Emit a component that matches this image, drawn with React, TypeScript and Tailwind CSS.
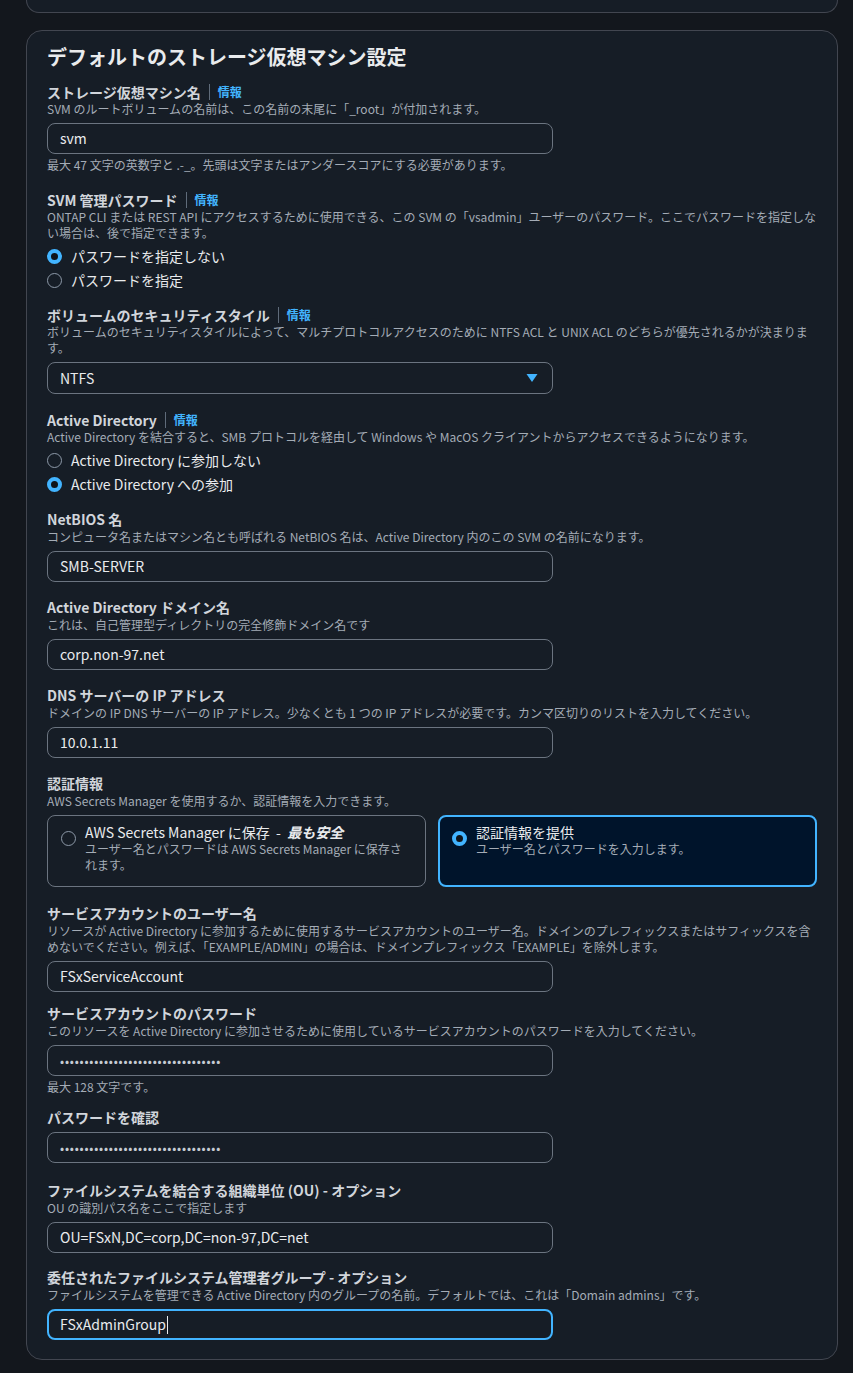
import type { ReactNode } from "react";

const FONT = { fontFamily: '"Noto Sans CJK JP", "Noto Sans", sans-serif' };

function Info() {
  return (
    <>
      <span className="mx-2 inline-block h-[16px] w-px bg-[#5f6b7a] align-middle" />
      <span className="text-[12px] font-bold text-[#42b4ff]">情報</span>
    </>
  );
}

function Label({ children, info }: { children: ReactNode; info?: boolean }) {
  return (
    <div className="flex h-[20px] items-center text-[14px] font-bold leading-[20px] text-[#d1d5db]">
      <span>{children}</span>
      {info && <Info />}
    </div>
  );
}

function Desc({ children, tight }: { children: ReactNode; tight?: boolean }) {
  return (
    <div className={tight ? "-mt-px text-[12px] leading-[16px] text-[#a4acb6]" : "text-[12px] leading-[16px] text-[#a4acb6]"}>
      {children}
    </div>
  );
}

function TextInput({ value, focused, password }: { value: string; focused?: boolean; password?: boolean }) {
  return (
    <div
      className={
        focused
          ? "mt-[6px] flex h-[31px] w-[506px] items-center rounded-lg border-2 border-[#42b4ff] bg-[#161d26] px-[11px] text-[14px] text-[#e9ebed]"
          : "mt-[6px] flex h-[31px] w-[506px] items-center rounded-lg border border-[#6b7480] bg-[#161d26] px-3 text-[14px] text-[#e9ebed]"
      }
    >
      {password ? (
        <span className="text-[12px] tracking-[0.8px] text-[#c6ccd4]">{"•".repeat(33)}</span>
      ) : (
        <span>{value}</span>
      )}
      {focused && <span className="ml-px inline-block h-[18px] w-px bg-[#e9ebed]" />}
    </div>
  );
}

function Radio({ checked }: { checked?: boolean }) {
  return checked ? (
    <span className="inline-block h-[15px] w-[15px] shrink-0 rounded-full border-[4px] border-[#42b4ff] bg-[#0f141a]" />
  ) : (
    <span className="inline-block h-[15px] w-[15px] shrink-0 rounded-full border border-[#8d99a8]" />
  );
}

function RadioRow({ label, checked }: { label: string; checked?: boolean }) {
  return (
    <div className="flex h-[24px] items-center gap-[9px] text-[14px] text-[#e9ebed]">
      <Radio checked={checked} />
      <span>{label}</span>
    </div>
  );
}

function Hint({ children }: { children: ReactNode }) {
  return <div className="mt-[3px] text-[12px] leading-[16px] text-[#a4acb6]">{children}</div>;
}

export default function App() {
  return (
    <div className="min-h-[1373px] w-[853px] bg-[#13171d] pl-[26px] pr-[15px]" style={FONT}>
      <div className="h-[13px] rounded-b-2xl border border-t-0 border-[#424650] bg-[#161d26]" />

      <div className="mt-[17px] rounded-2xl border border-[#424650] bg-[#161d26] px-5 pb-[19px] pt-[13px]">
        <h2 className="text-[20px] font-bold leading-[26px] text-[#e9ebed]">デフォルトのストレージ仮想マシン設定</h2>

        <div className="mt-[12px]">
          <Label info>ストレージ仮想マシン名</Label>
          <Desc tight>SVM のルートボリュームの名前は、この名前の末尾に「_root」が付加されます。</Desc>
          <TextInput value="svm" />
          <Hint>最大 47 文字の英数字と .-_。先頭は文字またはアンダースコアにする必要があります。</Hint>
        </div>

        <div className="mt-[17px]">
          <Label info>SVM 管理パスワード</Label>
          <Desc tight>
            ONTAP CLI または REST API にアクセスするために使用できる、この SVM の「vsadmin」ユーザーのパスワード。ここでパスワードを指定しない場合は、後で指定できます。
          </Desc>
          <div className="mt-[3px]">
            <RadioRow label="パスワードを指定しない" checked />
            <RadioRow label="パスワードを指定" />
          </div>
        </div>

        <div className="mt-[13px]">
          <Label info>ボリュームのセキュリティスタイル</Label>
          <Desc tight>
            ボリュームのセキュリティスタイルによって、マルチプロトコルアクセスのために NTFS ACL と UNIX ACL のどちらが優先されるかが決まります。
          </Desc>
          <div className="mt-[6px] flex h-[32px] w-[506px] items-center justify-between rounded-lg border border-[#6b7480] px-3 text-[14px] text-[#e9ebed]">
            <span>NTFS</span>
            <svg width="12" height="10" viewBox="0 0 12 10" className="mr-[2px]">
              <path d="M0.5 1 L11.5 1 L6 9 Z" fill="#42b4ff" />
            </svg>
          </div>
        </div>

        <div className="mt-[16px]">
          <Label info>Active Directory</Label>
          <Desc tight>Active Directory を結合すると、SMB プロトコルを経由して Windows や MacOS クライアントからアクセスできるようになります。</Desc>
          <div className="mt-[3px]">
            <RadioRow label="Active Directory に参加しない" />
            <RadioRow label="Active Directory への参加" checked />
          </div>
        </div>

        <div className="mt-[13px]">
          <Label>NetBIOS 名</Label>
          <Desc>コンピュータ名またはマシン名とも呼ばれる NetBIOS 名は、Active Directory 内のこの SVM の名前になります。</Desc>
          <TextInput value="SMB-SERVER" />
        </div>

        <div className="mt-[15px]">
          <Label>Active Directory ドメイン名</Label>
          <Desc>これは、自己管理型ディレクトリの完全修飾ドメイン名です</Desc>
          <TextInput value="corp.non-97.net" />
        </div>

        <div className="mt-[15px]">
          <Label>DNS サーバーの IP アドレス</Label>
          <Desc>ドメインの IP DNS サーバーの IP アドレス。少なくとも 1 つの IP アドレスが必要です。カンマ区切りのリストを入力してください。</Desc>
          <TextInput value="10.0.1.11" />
        </div>

        <div className="mt-[15px]">
          <Label>認証情報</Label>
          <Desc>AWS Secrets Manager を使用するか、認証情報を入力できます。</Desc>
          <div className="mt-[6px] grid grid-cols-2 gap-3">
            <div className="flex h-[72px] gap-[9px] rounded-lg border border-[#6b7480] px-[13px] pt-[7px]">
              <span className="mt-[4px]">
                <Radio />
              </span>
              <div>
                <div className="text-[14px] leading-[18px] text-[#e9ebed]">
                  AWS Secrets Manager に保存&nbsp; - &nbsp;<i className="font-bold">最も安全</i>
                </div>
                <div className="text-[12px] leading-[16px] text-[#a4acb6]">ユーザー名とパスワードは AWS Secrets Manager に保存されます。</div>
              </div>
            </div>
            <div className="flex h-[72px] gap-[9px] rounded-lg border-2 border-[#42b4ff] bg-[#00142b] px-[12px] pt-[6px]">
              <span className="mt-[4px]">
                <Radio checked />
              </span>
              <div>
                <div className="text-[14px] leading-[18px] text-[#e9ebed]">認証情報を提供</div>
                <div className="text-[12px] leading-[16px] text-[#a4acb6]">ユーザー名とパスワードを入力します。</div>
              </div>
            </div>
          </div>
        </div>

        <div className="mt-[16px]">
          <Label>サービスアカウントのユーザー名</Label>
          <Desc>
            リソースが Active Directory に参加するために使用するサービスアカウントのユーザー名。ドメインのプレフィックスまたはサフィックスを含めないでください。例えば、「EXAMPLE/ADMIN」の場合は、ドメインプレフィックス「EXAMPLE」を除外します。
          </Desc>
          <TextInput value="FSxServiceAccount" />
        </div>

        <div className="mt-[11px]">
          <Label>サービスアカウントのパスワード</Label>
          <Desc>このリソースを Active Directory に参加させるために使用しているサービスアカウントのパスワードを入力してください。</Desc>
          <TextInput value="" password />
          <Hint>最大 128 文字です。</Hint>
        </div>

        <div className="mt-[12px]">
          <Label>パスワードを確認</Label>
          <div className="-mt-px">
            <TextInput value="" password />
          </div>
        </div>

        <div className="mt-[17px]">
          <Label>ファイルシステムを結合する組織単位 (OU) - オプション</Label>
          <Desc>OU の識別パス名をここで指定します</Desc>
          <TextInput value="OU=FSxN,DC=corp,DC=non-97,DC=net" />
        </div>

        <div className="mt-[14px]">
          <Label>委任されたファイルシステム管理者グループ - オプション</Label>
          <Desc>ファイルシステムを管理できる Active Directory 内のグループの名前。デフォルトでは、これは「Domain admins」です。</Desc>
          <TextInput value="FSxAdminGroup" focused />
        </div>
      </div>
    </div>
  );
}
